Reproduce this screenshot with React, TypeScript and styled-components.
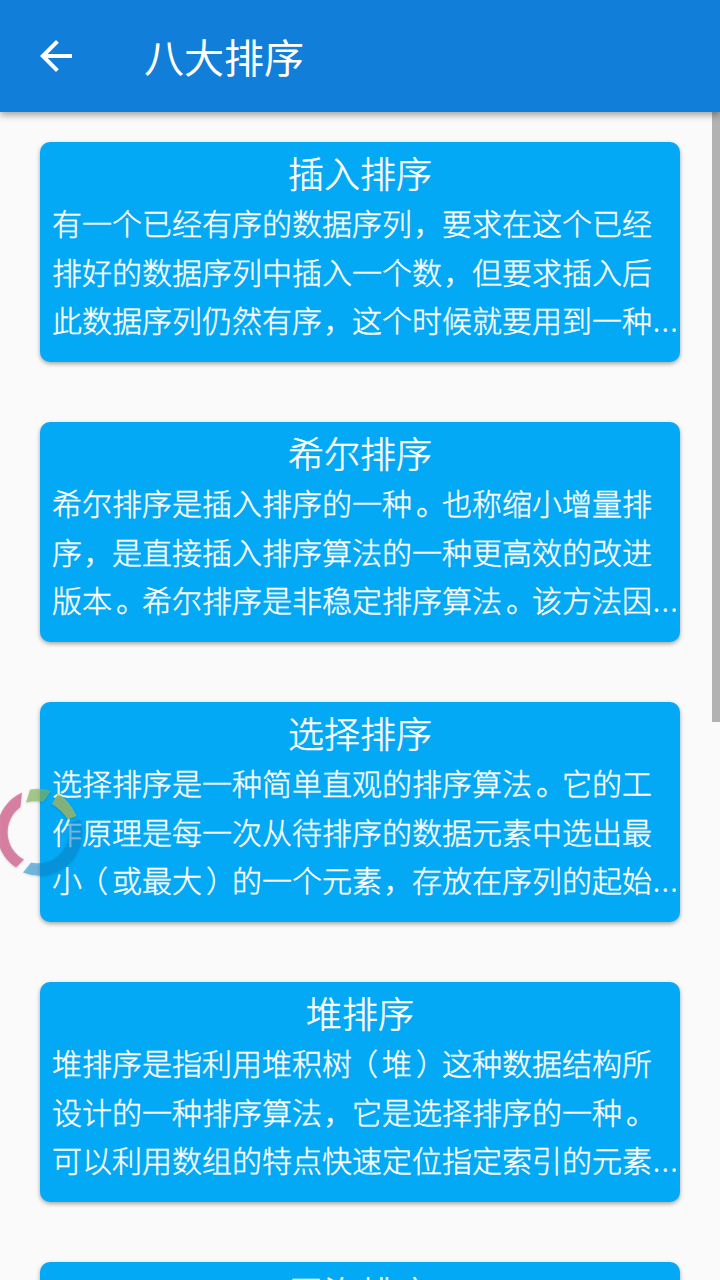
import React from "react";
import styled, { createGlobalStyle } from "styled-components";

const GlobalStyle = createGlobalStyle`
  html, body { margin: 0; padding: 0; }
  body { background: #fafafa; overflow: hidden; }
`;

const Screen = styled.div`
  position: relative;
  width: 720px;
  height: 1280px;
  overflow: hidden;
  display: flex;
  flex-direction: column;
  background: #fafafa;
  color: #fff;
  font-family: "Noto Sans CJK SC", "Noto Sans", sans-serif;
`;

const AppBar = styled.header`
  position: relative;
  z-index: 2;
  flex: 0 0 112px;
  box-sizing: border-box;
  display: flex;
  align-items: center;
  gap: 64px;
  padding-left: 32px;
  background: #117ed9;
  box-shadow: 0 3px 7px rgba(0, 0, 0, 0.36);
`;

const BackIcon = styled.svg`
  display: block;
  width: 48px;
  height: 48px;
  fill: #fff;
`;

const PageTitle = styled.h1`
  margin: 0;
  font-size: 40px;
  line-height: 56px;
  font-weight: 400;
`;

const CardList = styled.main`
  flex: 1;
  min-height: 0;
  overflow: hidden;
  display: flex;
  flex-direction: column;
  gap: 60px;
  padding: 30px 40px 0;
`;

const Card = styled.article`
  flex: 0 0 220px;
  box-sizing: border-box;
  padding: 5px 0 0 12px;
  border-radius: 10px;
  background: #03a9f4;
  box-shadow: 0 2px 4px rgba(0, 0, 0, 0.34);
`;

const CardTitle = styled.h2`
  margin: 0 12px 0 0;
  font-size: 36px;
  line-height: 51px;
  font-weight: 300;
  text-align: center;
  -webkit-text-stroke: 0.5px #fff;
`;

const CardText = styled.p`
  margin: 0;
  font-size: 30px;
  line-height: 48.5px;
  font-weight: 300;
  -webkit-text-stroke: 0.4px #fff;
`;

const Mark = styled.span<{ $shift: number }>`
  margin-left: ${({ $shift }) => $shift}px;
  margin-right: ${({ $shift }) => -$shift}px;
`;

const Ellipsis = styled.span`
  font-family: "Noto Sans", sans-serif;
  font-size: 36px;
  line-height: 1;
  -webkit-text-stroke: 0;
`;

const ScrollThumb = styled.div`
  position: absolute;
  z-index: 1;
  top: 112px;
  right: 0;
  width: 8px;
  height: 610px;
  background: #b2b2b2;
`;

const FloatingRing = styled.svg`
  position: absolute;
  z-index: 3;
  left: 0;
  top: 780px;
  width: 90px;
  height: 104px;
  filter: drop-shadow(0 1px 1px rgba(0, 0, 0, 0.2));
`;

const sorts = [
  {
    title: "插入排序",
    text: "有一个已经有序的数据序列，要求在这个已经排好的数据序列中插入一个数，但要求插入后此数据序列仍然有序，这个时候就要用到一种…",
  },
  {
    title: "希尔排序",
    text: "希尔排序是插入排序的一种。也称缩小增量排序，是直接插入排序算法的一种更高效的改进版本。希尔排序是非稳定排序算法。该方法因…",
  },
  {
    title: "选择排序",
    text: "选择排序是一种简单直观的排序算法。它的工作原理是每一次从待排序的数据元素中选出最小（或最大）的一个元素，存放在序列的起始…",
  },
  {
    title: "堆排序",
    text: "堆排序是指利用堆积树（堆）这种数据结构所设计的一种排序算法，它是选择排序的一种。可以利用数组的特点快速定位指定索引的元素…",
  },
  { title: "冒泡排序", text: "" },
];

// Punctuation sits closer to the middle of its em box than the font draws it.
const markShift: Record<string, number> = { "，": 1.5, "。": 4, "（": -4, "）": 4 };

function renderText(text: string) {
  return text.split(/([，。（）…])/).map((part, i) => {
    if (part === "…") return <Ellipsis key={i}>{part}</Ellipsis>;
    if (part in markShift)
      return (
        <Mark key={i} $shift={markShift[part]}>
          {part}
        </Mark>
      );
    return part;
  });
}

export default function App() {
  return (
    <Screen>
      <GlobalStyle />
      <AppBar>
        <BackIcon viewBox="0 0 24 24">
          <path d="M20 11H7.83l5.59-5.59L12 4l-8 8 8 8 1.41-1.41L7.83 13H20v-2z" />
        </BackIcon>
        <PageTitle>八大排序</PageTitle>
      </AppBar>
      <CardList>
        {sorts.map((sort) => (
          <Card key={sort.title}>
            <CardTitle>{sort.title}</CardTitle>
            <CardText>{renderText(sort.text)}</CardText>
          </Card>
        ))}
      </CardList>
      <ScrollThumb />
      <FloatingRing viewBox="0 0 90 104">
        <path d="M22 12.5 A43 43 0 0 0 16 87.5 L24 79.5 A31 31 0 0 1 20.5 27 Z" fill="#d25788" fillOpacity="0.7" />
        <path d="M30 9.5 Q40 7.5 51 11 L43 22 Q35 20.5 26 22.5 Z" fill="#86b95a" fillOpacity="0.65" />
        <path d="M58 13.5 Q70 21 76.5 36 L68 39.5 Q61 29.5 52 24 Z" fill="#b5bd57" fillOpacity="0.72" />
        <path d="M80 39 A43 43 0 0 1 23 92.5 L31 82.5 A31 31 0 0 0 69 52 Q69 47 68 44 Z" fill="#0b8bd6" fillOpacity="0.52" />
      </FloatingRing>
    </Screen>
  );
}
